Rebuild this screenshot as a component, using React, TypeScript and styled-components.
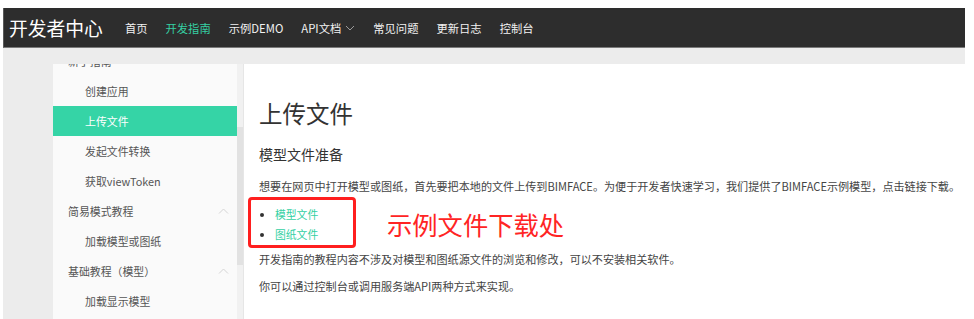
import { FC } from 'react';
import styled, { createGlobalStyle } from 'styled-components';

const GlobalStyle = createGlobalStyle`
  html, body {
    margin: 0;
    padding: 0;
    background: #fff;
  }
  body {
    font-family: "Noto Sans CJK SC", "Noto Sans", sans-serif;
    color: #333;
  }
`;

const Page = styled.div`
  width: 962px;
  height: 319px;
  margin-left: 3px;
  padding-top: 8px;
  box-sizing: border-box;
  display: flex;
  flex-direction: column;
  background: #ececec;
  background-clip: content-box;
  overflow: hidden;
`;

const Header = styled.header`
  height: 39px;
  flex-shrink: 0;
  display: flex;
  align-items: center;
  background: #2d2d2d;
  border-bottom: 1px solid #7a7a7a;
  border-left: 1px solid #5a5a5a;
  padding-left: 5px;
`;

const Logo = styled.div`
  font-size: 18.8px;
  color: #fff;
  margin-right: 22px;
`;

const Nav = styled.nav`
  display: flex;
  align-items: center;
  gap: 18px;
`;

const NavItem = styled.a<{ $active?: boolean }>`
  display: flex;
  align-items: center;
  gap: 4px;
  font-size: 11.3px;
  color: ${(p) => (p.$active ? '#35d0a3' : '#f2f2f2')};
  text-decoration: none;
  cursor: pointer;
`;

const Body = styled.div`
  flex: 1;
  display: flex;
  padding: 16px 0 0 50px;
  min-height: 0;
`;

const Sidebar = styled.aside`
  width: 184px;
  flex-shrink: 0;
  background: #fafafa;
  overflow: hidden;
`;

/* list is scrolled a little: the first group title sits under the top edge */
const SideList = styled.ul`
  list-style: none;
  margin: -18px 0 0;
  padding: 0;
`;

const SideRow = styled.li<{ $level: number; $active?: boolean }>`
  height: 30px;
  display: flex;
  align-items: center;
  justify-content: space-between;
  padding-left: ${(p) => (p.$level === 0 ? 15 : 32)}px;
  padding-right: 8px;
  font-size: 10.9px;
  color: ${(p) => (p.$active ? '#fff' : '#555')};
  background: ${(p) => (p.$active ? '#35d4a6' : 'transparent')};
  white-space: nowrap;
`;

const ScrollTrack = styled.div`
  width: 6px;
  flex-shrink: 0;
  background: #f1f1f1;
  display: flex;
  flex-direction: column;
  padding-top: 63px;
`;

const ScrollThumb = styled.div`
  height: 138px;
  background: #e2e2e2;
`;

const Content = styled.main`
  flex: 1;
  background: #fff;
  border-left: 1px solid #e6e6e6;
  padding: 0 0 0 15px;
`;

const Title = styled.h1`
  margin: 33px 0 0;
  font-size: 23.5px;
  font-weight: 400;
  line-height: 32px;
  color: #333;
`;

const SubTitle = styled.h3`
  margin: 15px 0 0;
  font-size: 14px;
  font-weight: 400;
  line-height: 20px;
  color: #333;
`;

const Para = styled.p<{ $gap: number }>`
  margin: ${(p) => p.$gap}px 0 0;
  font-size: 11.1px;
  line-height: 16px;
  color: #444;
  white-space: nowrap;
`;

const LinkArea = styled.div`
  position: relative;
  margin-top: 10px;
`;

const LinkList = styled.ul`
  margin: 0;
  padding: 0 0 0 16px;
  list-style: disc;
  font-size: 10.8px;
  line-height: 20px;
  color: #333;
`;

const DocLink = styled.a`
  color: #35d0a3;
  text-decoration: none;
`;

const Marker = styled.div`
  position: absolute;
  left: -11px;
  top: -7px;
  width: 102px;
  height: 45px;
  border: 3px solid #ff1f1f;
  border-radius: 4px;
`;

const Note = styled.div`
  position: absolute;
  left: 128px;
  top: 3px;
  font-size: 25.3px;
  line-height: 34px;
  color: #ff2424;
  white-space: nowrap;
`;

const ChevronDown = () => (
  <svg width="10" height="6" viewBox="0 0 10 6" fill="none">
    <path d="M1 1l4 4 4-4" stroke="#9a9a9a" strokeWidth="1" />
  </svg>
);

const ChevronUp = () => (
  <svg width="11" height="6" viewBox="0 0 11 6" fill="none">
    <path d="M1 5.5l4.5-4.5 4.5 4.5" stroke="#d4d4d4" strokeWidth="1" />
  </svg>
);

interface ISideItem {
  label: string;
  level: number;
  active?: boolean;
  group?: boolean;
}

const navItems = ['首页', '开发指南', '示例DEMO', 'API文档', '常见问题', '更新日志', '控制台'];

const sideItems: ISideItem[] = [
  { label: '新手指南', level: 0 },
  { label: '创建应用', level: 1 },
  { label: '上传文件', level: 1, active: true },
  { label: '发起文件转换', level: 1 },
  { label: '获取viewToken', level: 1 },
  { label: '简易模式教程', level: 0, group: true },
  { label: '加载模型或图纸', level: 1 },
  { label: '基础教程（模型）', level: 0, group: true },
  { label: '加载显示模型', level: 1 },
];

const App: FC = () => {
  return (
    <>
      <GlobalStyle />
      <Page>
        <Header>
          <Logo>开发者中心</Logo>
          <Nav>
            {navItems.map((item) => (
              <NavItem key={item} $active={item === '开发指南'}>
                {item}
                {item === 'API文档' && <ChevronDown />}
              </NavItem>
            ))}
          </Nav>
        </Header>
        <Body>
          <Sidebar>
            <SideList>
              {sideItems.map((item) => (
                <SideRow key={item.label} $level={item.level} $active={item.active}>
                  <span>{item.label}</span>
                  {item.group && <ChevronUp />}
                </SideRow>
              ))}
            </SideList>
          </Sidebar>
          <ScrollTrack>
            <ScrollThumb />
          </ScrollTrack>
          <Content>
            <Title>上传文件</Title>
            <SubTitle>模型文件准备</SubTitle>
            <Para $gap={14}>
              想要在网页中打开模型或图纸，首先要把本地的文件上传到BIMFACE。为便于开发者快速学习，我们提供了BIMFACE示例模型，点击链接下载。
            </Para>
            <LinkArea>
              <LinkList>
                <li>
                  <DocLink>模型文件</DocLink>
                </li>
                <li>
                  <DocLink>图纸文件</DocLink>
                </li>
              </LinkList>
              <Marker />
              <Note>示例文件下载处</Note>
            </LinkArea>
            <Para $gap={7}>开发指南的教程内容不涉及对模型和图纸源文件的浏览和修改，可以不安装相关软件。</Para>
            <Para $gap={11}>你可以通过控制台或调用服务端API两种方式来实现。</Para>
          </Content>
        </Body>
      </Page>
    </>
  );
};

export default App;
